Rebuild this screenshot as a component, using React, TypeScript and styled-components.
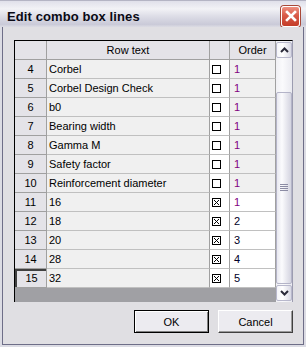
import React from "react";
import styled, { createGlobalStyle } from "styled-components";

const GlobalStyle = createGlobalStyle`
  html, body {
    margin: 0;
    padding: 0;
    background: #ffffff;
    overflow: hidden;
  }
  * {
    box-sizing: border-box;
  }
`;

const Window = styled.div`
  width: 306px;
  height: 347px;
  display: flex;
  flex-direction: column;
  background: #dcdce4;
  font-family: "Liberation Sans", Arial, sans-serif;
  font-size: 11px;
  color: #000;
`;

const TitleBar = styled.div`
  height: 27px;
  flex-shrink: 0;
  display: flex;
  align-items: center;
  justify-content: space-between;
  padding: 4px 6px 0 7px;
  border-top: 1px solid #b4b4c4;
  background: linear-gradient(
    to bottom,
    #e0e0ea 0%,
    #f2f2f6 30%,
    #dcdce6 60%,
    #cacad8 90%,
    #dcdce4 100%
  );
`;

const Title = styled.span`
  font-size: 13px;
  font-weight: bold;
  color: #0a0a14;
  letter-spacing: 0.1px;
`;

const CloseButton = styled.div`
  width: 19px;
  height: 21px;
  border-radius: 3px;
  border: 1px solid #ffffff;
  box-shadow: 0 0 0 1px #a84838;
  background: linear-gradient(to bottom, #ee9080 0%, #d85a48 45%, #c43c28 100%);
  display: flex;
  align-items: center;
  justify-content: center;
`;

const Body = styled.div`
  flex: 1;
  margin: 0 2px 2px;
  border: 1px solid #6e6e88;
  border-top: none;
  background: #e0dfe3;
  padding: 13px 10px 0 11px;
  display: flex;
  flex-direction: column;
`;

const Grid = styled.div`
  width: 279px;
  height: 262px;
  display: flex;
  border-top: 1px solid #000;
  border-left: 1px solid #000;
  border-right: 1px solid #9c9cb0;
`;

const TableArea = styled.div`
  width: 261px;
  background: #a0a0a4;
  display: flex;
  flex-direction: column;
`;

const Row = styled.div`
  display: grid;
  grid-template-columns: 32px 163px 20px 46px;
  height: 19px;
`;

const HeaderCell = styled.div<{ $active?: boolean }>`
  background: #e4e3e8;
  border-right: 1px solid #a0a0a0;
  border-bottom: 1px solid #a0a0a0;
  line-height: 18px;
  text-align: center;
  white-space: nowrap;
  overflow: hidden;
  ${(p) =>
    p.$active &&
    `
    box-shadow: inset 2px 2px 0 #404040;
    padding-left: 2px;
    padding-top: 1px;
    line-height: 17px;
  `}
`;

const Cell = styled.div<{ $white?: boolean; $color?: string }>`
  background: ${(p) => (p.$white ? "#ffffff" : "#f0f0f0")};
  border-right: 1px solid #a0a0a0;
  border-bottom: 1px solid #c0c0c0;
  line-height: 18px;
  padding-left: 2px;
  white-space: nowrap;
  overflow: hidden;
  color: ${(p) => p.$color || "#000"};
`;

const OrderCell = styled(Cell)`
  padding-left: 4px;
`;

const CheckCell = styled.div`
  background: #ffffff;
  border-right: 1px solid #a0a0a0;
  border-bottom: 1px solid #c0c0c0;
  display: flex;
  align-items: center;
  padding-left: 2px;
`;

const ScrollBar = styled.div`
  width: 16px;
  display: flex;
  flex-direction: column;
  padding: 1px 0;
  background: linear-gradient(to right, #f0f0f4, #fafafc 40%, #eaeaf0);
`;

const ArrowButton = styled.div`
  width: 16px;
  height: 16px;
  flex-shrink: 0;
  border: 1px solid #b8b8cc;
  border-radius: 2px;
  background: linear-gradient(to right, #f4f4f8, #ffffff 40%, #d8d8e4);
  display: flex;
  align-items: center;
  justify-content: center;
`;

const TrackGap = styled.div<{ $h: number }>`
  height: ${(p) => p.$h}px;
  flex-shrink: 0;
`;

const Thumb = styled.div`
  height: 192px;
  flex-shrink: 0;
  border: 1px solid #b4b4c8;
  border-radius: 2px;
  background: linear-gradient(to right, #e8e8f0, #fbfbfd 35%, #d4d4e0);
  display: flex;
  align-items: center;
  justify-content: center;
`;

const ButtonRow = styled.div`
  display: flex;
  justify-content: flex-end;
  gap: 9px;
  margin-top: 8px;
  width: 279px;
`;

const DialogButton = styled.div<{ $default?: boolean }>`
  width: 75px;
  height: 23px;
  display: flex;
  align-items: center;
  justify-content: center;
  font-size: 11px;
  background: #ecebf0;
  border: 1px solid ${(p) => (p.$default ? "#000" : "#ffffff")};
  ${(p) =>
    p.$default
      ? `box-shadow: inset 1px 1px 0 #ffffff, inset -1px -1px 0 #808080;`
      : `border-right-color: #404040; border-bottom-color: #404040;
         box-shadow: inset -1px -1px 0 #9a9a9a;`}
`;

const CheckBox: React.FC<{ checked: boolean }> = ({ checked }) => (
  <svg width="9" height="9" viewBox="0 0 9 9">
    <rect x="0.5" y="0.5" width="8" height="8" fill="#fff" stroke="#000" />
    {checked && <path d="M2 2 L7 7 M7 2 L2 7" stroke="#000" strokeWidth="1" />}
  </svg>
);

const rows = [
  { n: 4, text: "Corbel", checked: false, order: 1 },
  { n: 5, text: "Corbel Design Check", checked: false, order: 1 },
  { n: 6, text: "b0", checked: false, order: 1 },
  { n: 7, text: "Bearing width", checked: false, order: 1 },
  { n: 8, text: "Gamma M", checked: false, order: 1 },
  { n: 9, text: "Safety factor", checked: false, order: 1 },
  { n: 10, text: "Reinforcement diameter", checked: false, order: 1 },
  { n: 11, text: "16", checked: true, order: 1 },
  { n: 12, text: "18", checked: true, order: 2 },
  { n: 13, text: "20", checked: true, order: 3 },
  { n: 14, text: "28", checked: true, order: 4 },
  { n: 15, text: "32", checked: true, order: 5 },
];

const App: React.FC = () => {
  return (
    <>
      <GlobalStyle />
      <Window>
        <TitleBar>
          <Title>Edit combo box lines</Title>
          <CloseButton>
            <svg width="12" height="12" viewBox="0 0 12 12">
              <path
                d="M2 2 L10 10 M10 2 L2 10"
                stroke="#fff"
                strokeWidth="2.6"
                strokeLinecap="square"
              />
            </svg>
          </CloseButton>
        </TitleBar>
        <Body>
          <Grid>
            <TableArea>
              <Row>
                <HeaderCell />
                <HeaderCell>Row text</HeaderCell>
                <HeaderCell />
                <HeaderCell>Order</HeaderCell>
              </Row>
              {rows.map((r) => (
                <Row key={r.n}>
                  <HeaderCell $active={r.n === 15}>{r.n}</HeaderCell>
                  <Cell>{r.text}</Cell>
                  <CheckCell>
                    <CheckBox checked={r.checked} />
                  </CheckCell>
                  <OrderCell
                    $white={r.checked}
                    $color={r.order === 1 ? "#800080" : "#000028"}
                  >
                    {r.order}
                  </OrderCell>
                </Row>
              ))}
            </TableArea>
            <ScrollBar>
              <ArrowButton>
                <svg width="9" height="6" viewBox="0 0 9 6">
                  <path d="M1 5 L4.5 1.5 L8 5" fill="none" stroke="#2a2a3a" strokeWidth="2" />
                </svg>
              </ArrowButton>
              <TrackGap $h={34} />
              <Thumb>
                <svg width="8" height="8" viewBox="0 0 8 8">
                  {[0.5, 2.5, 4.5, 6.5].map((y) => (
                    <path key={y} d={`M0 ${y} H8`} stroke="#8c8ca4" strokeWidth="1" />
                  ))}
                </svg>
              </Thumb>
              <TrackGap $h={1} />
              <ArrowButton>
                <svg width="9" height="6" viewBox="0 0 9 6">
                  <path d="M1 1 L4.5 4.5 L8 1" fill="none" stroke="#2a2a3a" strokeWidth="2" />
                </svg>
              </ArrowButton>
            </ScrollBar>
          </Grid>
          <ButtonRow>
            <DialogButton $default>OK</DialogButton>
            <DialogButton>Cancel</DialogButton>
          </ButtonRow>
        </Body>
      </Window>
    </>
  );
};

export default App;
